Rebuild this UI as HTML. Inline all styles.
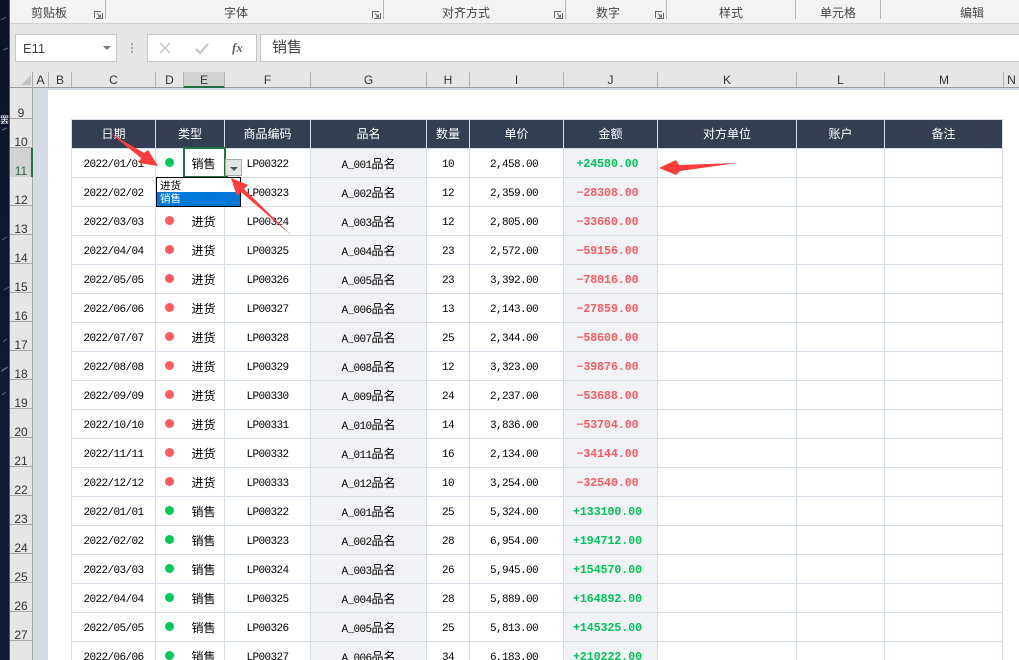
<!DOCTYPE html>
<html lang="zh-CN">
<head>
<meta charset="utf-8">
<title>Excel</title>
<style>
html,body{margin:0;padding:0;width:1019px;height:660px;overflow:hidden;background:#fff}
*{box-sizing:border-box}
body{position:relative;font-family:"Liberation Sans","Noto Sans CJK SC",sans-serif}
.a{position:absolute}
.rb{top:5px;font-size:12px;line-height:16px;color:#444;white-space:nowrap}
.sep{top:0;width:1px;height:19px;background:#b5b5b5}
.dl{top:11px;width:9px;height:8px}
.ch{top:72px;height:15px;font-size:12px;line-height:16px;color:#333;text-align:center}
.cs{top:72px;width:1px;height:15px;background:#b0b0b0}
.rh{left:10px;width:22px;height:29px;border-bottom:1px solid #a8a8a8;font-size:12px;line-height:14px;color:#333;text-align:center;padding-top:16px}
table{position:absolute;left:71px;top:120px;width:932px;border-collapse:separate;border-spacing:0;table-layout:fixed;font-family:"Liberation Mono","Noto Sans CJK SC",monospace;font-size:11px;line-height:14px;letter-spacing:-.6px;color:#000}
td,th{height:29px;padding:4px 0 0;border-right:1px solid #d6dce5;border-bottom:1px solid #d6dce5;text-align:center;font-weight:normal;white-space:nowrap;overflow:hidden}
th{padding:0;background:#333f50;color:#fff;font-family:"Liberation Sans","Noto Sans CJK SC",sans-serif;font-size:12px;letter-spacing:0;border-color:#d6dce5}
td:first-child,th:first-child{border-left:1px solid #d6dce5}
td.t{position:relative;font-family:"Liberation Sans","Noto Sans CJK SC",sans-serif;font-size:12px;letter-spacing:0;padding:2px 0 0 27px}
.t i{position:absolute;left:9px;top:9px;width:9px;height:9px;border-radius:50%}
.s i{background:#00c95c}.b i{background:#ff5a5f}
td.f{background:#f0f2f6;padding-top:4px}
.f span{font-family:"Noto Sans CJK SC",sans-serif;font-size:12px;line-height:14px;letter-spacing:0}
td.p{padding-right:5px}
td.g,td.r{font-weight:bold;font-size:11.5px;letter-spacing:0;padding-right:6px;background:#f0f2f6}
.g{color:#00c457}.r{color:#ff5a5f}
</style>
</head>
<body>
<!-- desktop strip -->
<div class="a" style="left:0;top:0;width:10px;height:660px;background:linear-gradient(#0c1424,#111a33 60%,#131a36)"></div>
<div class="a" style="left:0;top:112px;width:9px;font-size:9px;line-height:16px;color:#fff;font-family:'Noto Sans CJK SC',sans-serif;overflow:hidden">罢</div>
<svg class="a" style="left:0;top:0" width="10" height="660"><g stroke="#5d6878" stroke-width="1"><path d="M2 130l5-2M2 240l5-3M4 290l5-3M3 342l4-3M2 370l6-3M1 372l7-5M2 395l4-3M3 50l5-2M1 20l5-3"/></g></svg>
<div class="a" style="left:9px;top:0;width:1px;height:660px;background:#217346"></div>

<!-- ribbon -->
<div class="a" style="left:10px;top:0;width:1009px;height:23px;background:#f3f3f3"></div>
<div class="a" style="left:10px;top:23px;width:1009px;height:1px;background:#d2d2d2"></div>
<div class="a" style="left:10px;top:24px;width:1009px;height:64px;background:#e6e6e6"></div>
<div class="a rb" style="left:31px">剪贴板</div>
<div class="a rb" style="left:224px">字体</div>
<div class="a rb" style="left:442px">对齐方式</div>
<div class="a rb" style="left:596px">数字</div>
<div class="a rb" style="left:719px">样式</div>
<div class="a rb" style="left:820px">单元格</div>
<div class="a rb" style="left:960px">编辑</div>
<div class="a sep" style="left:105px"></div>
<div class="a sep" style="left:383px"></div>
<div class="a sep" style="left:565px"></div>
<div class="a sep" style="left:666px"></div>
<div class="a sep" style="left:795px"></div>
<div class="a sep" style="left:880px"></div>
<svg class="a dl" style="left:94px" viewBox="0 0 9 8"><path d="M.5 7V.5H7M8.500 2v5.500H2M3 2.500l3.500 3.500M6.500 3.500V6H4" fill="none" stroke="#666" stroke-width="1"/></svg>
<svg class="a dl" style="left:372px" viewBox="0 0 9 8"><path d="M.5 7V.5H7M8.500 2v5.500H2M3 2.500l3.500 3.500M6.500 3.500V6H4" fill="none" stroke="#666" stroke-width="1"/></svg>
<svg class="a dl" style="left:554px" viewBox="0 0 9 8"><path d="M.5 7V.5H7M8.500 2v5.500H2M3 2.500l3.500 3.500M6.500 3.500V6H4" fill="none" stroke="#666" stroke-width="1"/></svg>
<svg class="a dl" style="left:655px" viewBox="0 0 9 8"><path d="M.5 7V.5H7M8.500 2v5.500H2M3 2.500l3.500 3.500M6.500 3.500V6H4" fill="none" stroke="#666" stroke-width="1"/></svg>

<!-- formula bar -->
<div class="a" style="left:15px;top:34px;width:102px;height:28px;background:#fff;border:1px solid #c6c6c6;font-size:13px;line-height:27px;color:#444;padding-left:7px">E11</div>
<div class="a" style="left:103px;top:46px;width:0;height:0;border-left:4px solid transparent;border-right:4px solid transparent;border-top:4px solid #777"></div>
<div class="a" style="left:131px;top:43px;width:2px;height:2px;background:#aaa;box-shadow:0 4px 0 #aaa,0 8px 0 #aaa"></div>
<div class="a" style="left:147px;top:34px;width:110px;height:28px;background:#fff;border:1px solid #c6c6c6"></div>
<svg class="a" style="left:147px;top:34px" width="110" height="28"><path d="M13 9l10 10M23 9L13 19" stroke="#c8c8c8" stroke-width="1.500" fill="none"/><path d="M49 15l4 4 8-9" stroke="#c8c8c8" stroke-width="2.400" fill="none"/><text x="85" y="18" font-family="Liberation Serif,serif" font-style="italic" font-weight="bold" font-size="13" fill="#666">fx</text></svg>
<div class="a" style="left:260px;top:34px;width:759px;height:28px;background:#fff;border:1px solid #c6c6c6;border-right:0;font-size:15px;line-height:25px;color:#444;padding-left:11px">销售</div>

<!-- column headers -->
<div class="a" style="left:10px;top:87px;width:1009px;height:1px;background:#9c9c9c"></div>
<svg class="a" style="left:20px;top:74px" width="12" height="12"><path d="M1 11L11 1v10z" fill="#c4c4c4"/></svg>
<div class="a" style="left:183px;top:72px;width:42px;height:15px;background:#d2d2d2"></div>
<div class="a" style="left:183px;top:86px;width:42px;height:2px;background:#217346"></div>
<div class="a ch" style="left:33px;width:15px">A</div>
<div class="a ch" style="left:49px;width:22px">B</div>
<div class="a ch" style="left:72px;width:83px">C</div>
<div class="a ch" style="left:156px;width:27px">D</div>
<div class="a ch" style="left:184px;width:40px">E</div>
<div class="a ch" style="left:225px;width:85px">F</div>
<div class="a ch" style="left:311px;width:115px">G</div>
<div class="a ch" style="left:427px;width:42px">H</div>
<div class="a ch" style="left:470px;width:93px">I</div>
<div class="a ch" style="left:564px;width:93px">J</div>
<div class="a ch" style="left:658px;width:138px">K</div>
<div class="a ch" style="left:797px;width:87px">L</div>
<div class="a ch" style="left:885px;width:118px">M</div>
<div class="a ch" style="left:1004px;width:15px">N</div>
<div class="a cs" style="left:32px"></div><div class="a cs" style="left:48px"></div><div class="a cs" style="left:71px"></div><div class="a cs" style="left:155px"></div><div class="a cs" style="left:183px"></div><div class="a cs" style="left:224px"></div><div class="a cs" style="left:310px"></div><div class="a cs" style="left:426px"></div><div class="a cs" style="left:469px"></div><div class="a cs" style="left:563px"></div><div class="a cs" style="left:657px"></div><div class="a cs" style="left:796px"></div><div class="a cs" style="left:884px"></div><div class="a cs" style="left:1003px"></div>

<!-- sheet gutter -->
<div class="a" style="left:33px;top:88px;width:15px;height:572px;background:#d4dbe4"></div>
<div class="a" style="left:33px;top:88px;width:986px;height:2px;background:#d4dbe4"></div>
<div class="a" style="left:10px;top:88px;width:22px;height:572px;background:#e6e6e6"></div>
<div class="a" style="left:32px;top:72px;width:1px;height:588px;background:#a8a8a8"></div>

<!-- row headers -->
<div class="a" style="left:10px;top:148px;width:22px;height:29px;background:#d2d2d2"></div>
<div class="a" style="left:31px;top:148px;width:2px;height:29px;background:#217346"></div>
<div class="a rh" style="top:90px">9</div>
<div class="a rh" style="top:119px">10</div>
<div class="a rh" style="top:148px;color:#2c6a4a;border-bottom:0">11</div>
<div class="a rh" style="top:177px">12</div>
<div class="a rh" style="top:206px">13</div>
<div class="a rh" style="top:235px">14</div>
<div class="a rh" style="top:264px">15</div>
<div class="a rh" style="top:293px">16</div>
<div class="a rh" style="top:322px">17</div>
<div class="a rh" style="top:351px">18</div>
<div class="a rh" style="top:380px">19</div>
<div class="a rh" style="top:409px">20</div>
<div class="a rh" style="top:438px">21</div>
<div class="a rh" style="top:467px">22</div>
<div class="a rh" style="top:496px">23</div>
<div class="a rh" style="top:525px">24</div>
<div class="a rh" style="top:554px">25</div>
<div class="a rh" style="top:583px">26</div>
<div class="a rh" style="top:612px">27</div>

<!-- table -->
<div class="a" style="left:71px;top:119px;width:933px;height:1px;background:#d6dce5"></div>
<table>
<colgroup><col style="width:85px"><col style="width:69px"><col style="width:86px"><col style="width:116px"><col style="width:43px"><col style="width:94px"><col style="width:94px"><col style="width:139px"><col style="width:88px"><col style="width:118px"></colgroup>
<tr><th>日期</th><th>类型</th><th>商品编码</th><th>品名</th><th>数量</th><th>单价</th><th>金额</th><th>对方单位</th><th>账户</th><th>备注</th></tr>
<tr><td>2022/01/01</td><td class="t s"><i></i>销售</td><td>LP00322</td><td class="f">A_001<span>品名</span></td><td>10</td><td class="p">2,458.00</td><td class="g">+24580.00</td><td></td><td></td><td></td></tr>
<tr><td>2022/02/02</td><td class="t s"></td><td>LP00323</td><td class="f">A_002<span>品名</span></td><td>12</td><td class="p">2,359.00</td><td class="r">−28308.00</td><td></td><td></td><td></td></tr>
<tr><td>2022/03/03</td><td class="t b"><i></i>进货</td><td>LP00324</td><td class="f">A_003<span>品名</span></td><td>12</td><td class="p">2,805.00</td><td class="r">−33660.00</td><td></td><td></td><td></td></tr>
<tr><td>2022/04/04</td><td class="t b"><i></i>进货</td><td>LP00325</td><td class="f">A_004<span>品名</span></td><td>23</td><td class="p">2,572.00</td><td class="r">−59156.00</td><td></td><td></td><td></td></tr>
<tr><td>2022/05/05</td><td class="t b"><i></i>进货</td><td>LP00326</td><td class="f">A_005<span>品名</span></td><td>23</td><td class="p">3,392.00</td><td class="r">−78016.00</td><td></td><td></td><td></td></tr>
<tr><td>2022/06/06</td><td class="t b"><i></i>进货</td><td>LP00327</td><td class="f">A_006<span>品名</span></td><td>13</td><td class="p">2,143.00</td><td class="r">−27859.00</td><td></td><td></td><td></td></tr>
<tr><td>2022/07/07</td><td class="t b"><i></i>进货</td><td>LP00328</td><td class="f">A_007<span>品名</span></td><td>25</td><td class="p">2,344.00</td><td class="r">−58600.00</td><td></td><td></td><td></td></tr>
<tr><td>2022/08/08</td><td class="t b"><i></i>进货</td><td>LP00329</td><td class="f">A_008<span>品名</span></td><td>12</td><td class="p">3,323.00</td><td class="r">−39876.00</td><td></td><td></td><td></td></tr>
<tr><td>2022/09/09</td><td class="t b"><i></i>进货</td><td>LP00330</td><td class="f">A_009<span>品名</span></td><td>24</td><td class="p">2,237.00</td><td class="r">−53688.00</td><td></td><td></td><td></td></tr>
<tr><td>2022/10/10</td><td class="t b"><i></i>进货</td><td>LP00331</td><td class="f">A_010<span>品名</span></td><td>14</td><td class="p">3,836.00</td><td class="r">−53704.00</td><td></td><td></td><td></td></tr>
<tr><td>2022/11/11</td><td class="t b"><i></i>进货</td><td>LP00332</td><td class="f">A_011<span>品名</span></td><td>16</td><td class="p">2,134.00</td><td class="r">−34144.00</td><td></td><td></td><td></td></tr>
<tr><td>2022/12/12</td><td class="t b"><i></i>进货</td><td>LP00333</td><td class="f">A_012<span>品名</span></td><td>10</td><td class="p">3,254.00</td><td class="r">−32540.00</td><td></td><td></td><td></td></tr>
<tr><td>2022/01/01</td><td class="t s"><i></i>销售</td><td>LP00322</td><td class="f">A_001<span>品名</span></td><td>25</td><td class="p">5,324.00</td><td class="g">+133100.00</td><td></td><td></td><td></td></tr>
<tr><td>2022/02/02</td><td class="t s"><i></i>销售</td><td>LP00323</td><td class="f">A_002<span>品名</span></td><td>28</td><td class="p">6,954.00</td><td class="g">+194712.00</td><td></td><td></td><td></td></tr>
<tr><td>2022/03/03</td><td class="t s"><i></i>销售</td><td>LP00324</td><td class="f">A_003<span>品名</span></td><td>26</td><td class="p">5,945.00</td><td class="g">+154570.00</td><td></td><td></td><td></td></tr>
<tr><td>2022/04/04</td><td class="t s"><i></i>销售</td><td>LP00325</td><td class="f">A_004<span>品名</span></td><td>28</td><td class="p">5,889.00</td><td class="g">+164892.00</td><td></td><td></td><td></td></tr>
<tr><td>2022/05/05</td><td class="t s"><i></i>销售</td><td>LP00326</td><td class="f">A_005<span>品名</span></td><td>25</td><td class="p">5,813.00</td><td class="g">+145325.00</td><td></td><td></td><td></td></tr>
<tr><td>2022/06/06</td><td class="t s"><i></i>销售</td><td>LP00327</td><td class="f">A_006<span>品名</span></td><td>34</td><td class="p">6,183.00</td><td class="g">+210222.00</td><td></td><td></td><td></td></tr>
</table>

<!-- active cell + dropdown -->
<div class="a" style="left:183px;top:147px;width:43px;height:31px;border:2px solid #217346"></div>
<div class="a" style="left:224px;top:175px;width:4px;height:3px;background:#217346"></div>
<div class="a" style="left:225px;top:159px;width:17px;height:17px;background:#e4e4e4;border:1px solid #a8a8a8"></div>
<div class="a" style="left:230px;top:167px;width:0;height:0;border-left:4px solid transparent;border-right:4px solid transparent;border-top:4px solid #555"></div>
<div class="a" style="left:156px;top:177px;width:85px;height:30px;background:#fff;border:1px solid #000;font-size:10.500px;line-height:14px;color:#000;padding:1px 0 0 3px">进货</div>
<div class="a" style="left:157px;top:192px;width:83px;height:14px;background:#0078d7;font-size:10.500px;line-height:15px;color:#fff;padding-left:3px">销售</div>

<!-- red arrows -->
<svg class="a" style="left:0;top:0" width="1019" height="660">
<g fill="#ff3b3b">
<polygon points="110,133 144,153 148,150 158,166 139,163 141,158"/>
<polygon points="231,178 248,185 244,189 292,236 241,192 237,196"/>
<polygon points="659,168 676,160 679,165 737,163 680,171 676,175"/>
</g>
</svg>
</body>
</html>
